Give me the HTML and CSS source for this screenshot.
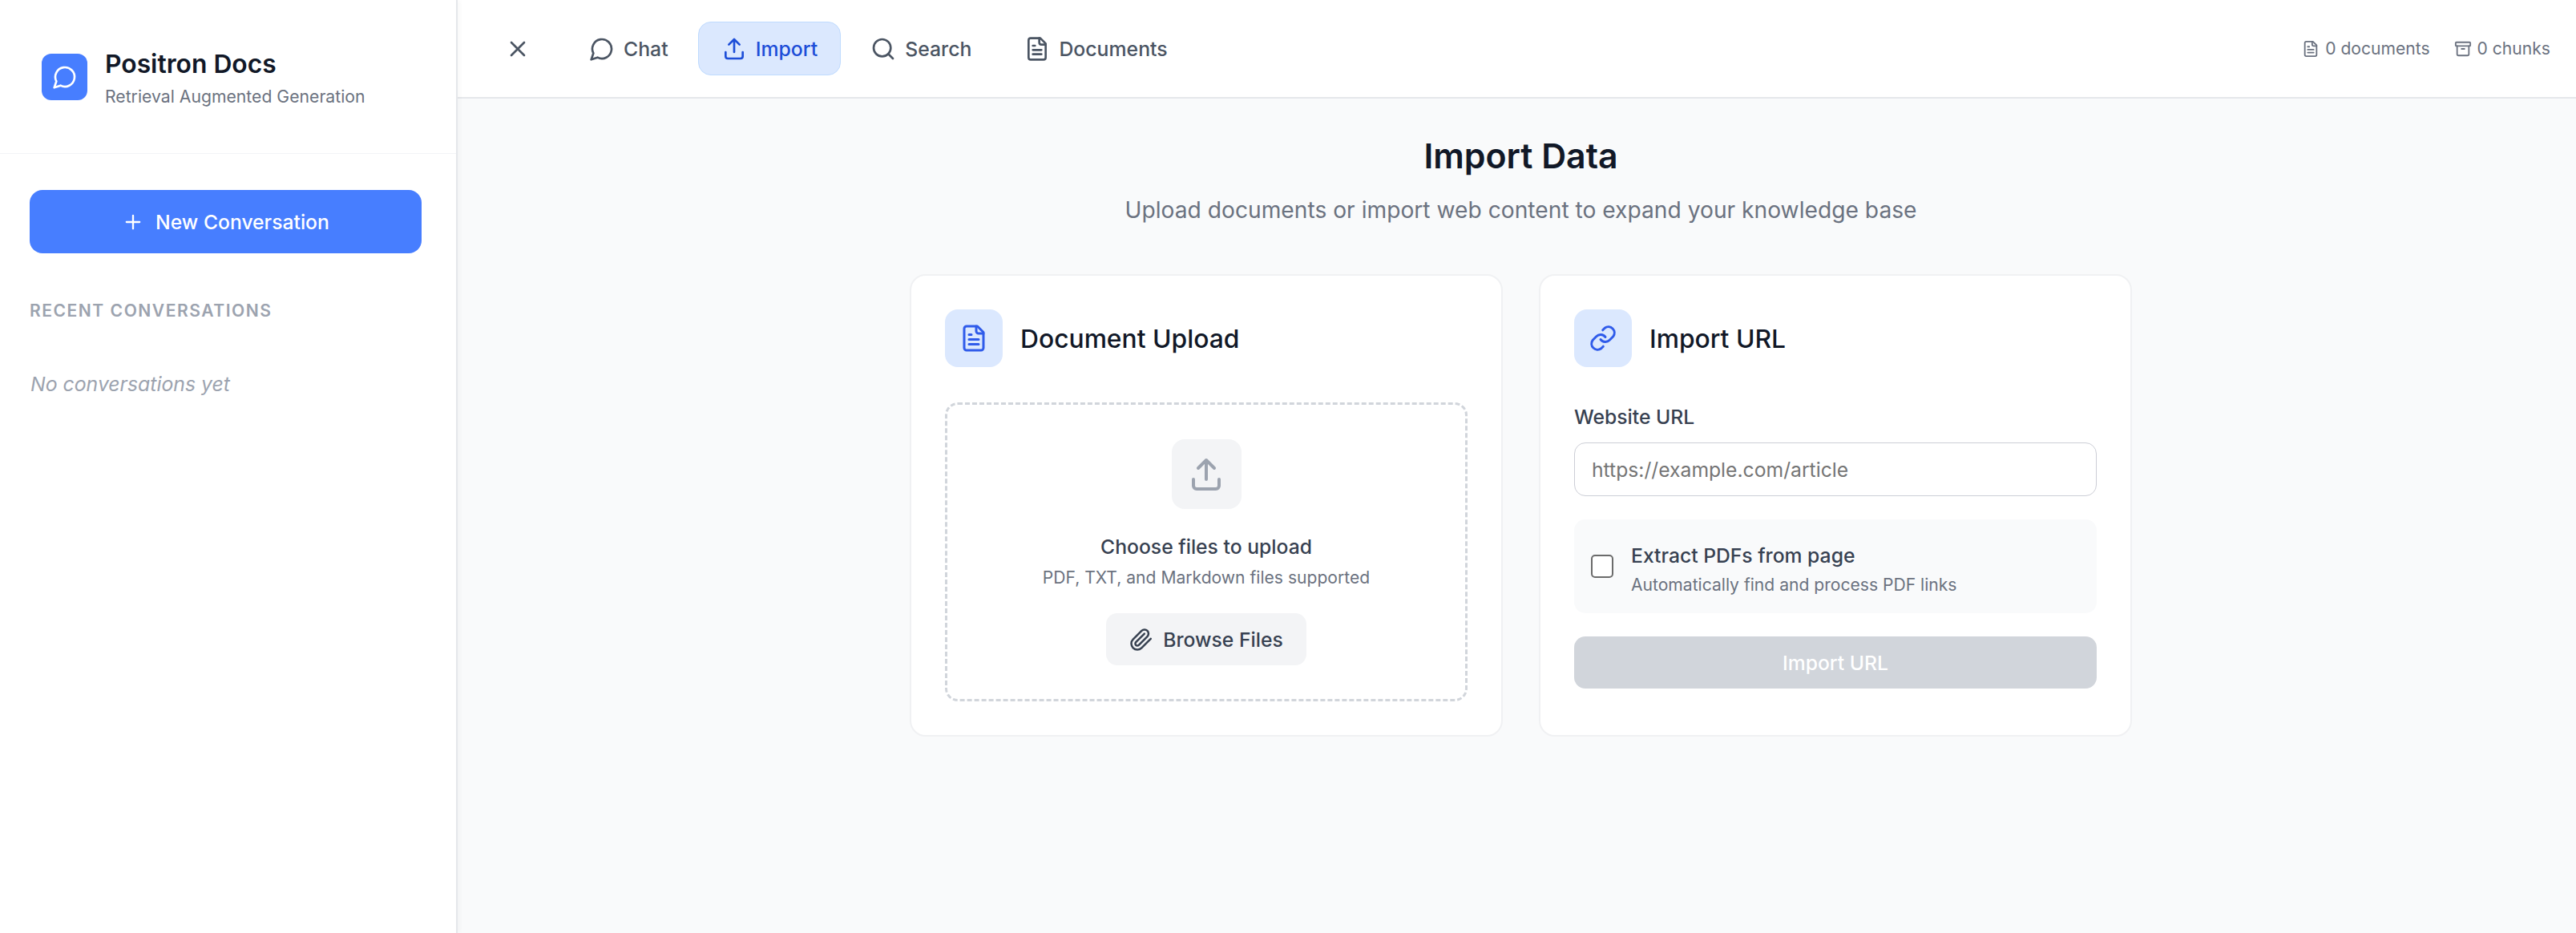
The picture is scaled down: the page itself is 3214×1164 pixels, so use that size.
FILE: index.html
```html
<!DOCTYPE html>
<html>
    <head>
        <title>Positron Docs</title>
        <link rel="stylesheet" href="styles.css">
    </head>
    <body>
        <aside class="sidebar">
            <div class="brand">
                <div class="brand-logo">
                    <svg class="icon" width="32" height="32" viewBox="0 0 24 24"><path d="M7.9 20A9 9 0 1 0 4 16.1L2 22Z"/></svg>
                </div>
                <div class="brand-text">
                    <div class="brand-name">Positron Docs</div>
                    <div class="brand-sub">Retrieval Augmented Generation</div>
                </div>
            </div>
            <div class="sidebar-body">
                <button class="new-btn">
                    <svg class="icon" width="28" height="28" viewBox="0 0 24 24"><path d="M5 12h14M12 5v14"/></svg>
                    New Conversation
                </button>
                <div class="recent-label">RECENT CONVERSATIONS</div>
                <div class="recent-empty">No conversations yet</div>
            </div>
        </aside>

        <div class="content">
            <header class="topbar">
                <button class="close-btn">
                    <svg class="icon" width="32" height="32" viewBox="0 0 24 24"><path d="M18 6 6 18M6 6l12 12"/></svg>
                </button>
                <nav class="tabs">
                    <a class="tab">
                        <svg class="icon" width="32" height="32" viewBox="0 0 24 24"><path d="M7.9 20A9 9 0 1 0 4 16.1L2 22Z"/></svg>
                        Chat
                    </a>
                    <a class="tab active">
                        <svg class="icon" width="32" height="32" viewBox="0 0 24 24"><path d="M12 15V3M7 8l5-5 5 5M4 15v4a2 2 0 0 0 2 2h12a2 2 0 0 0 2-2v-4"/></svg>
                        Import
                    </a>
                    <a class="tab">
                        <svg class="icon" width="32" height="32" viewBox="0 0 24 24"><circle cx="11" cy="11" r="8"/><path d="m21 21-4.3-4.3"/></svg>
                        Search
                    </a>
                    <a class="tab">
                        <svg class="icon" width="32" height="32" viewBox="0 0 24 24"><path d="M15 2H6a2 2 0 0 0-2 2v16a2 2 0 0 0 2 2h12a2 2 0 0 0 2-2V7Z"/><path d="M14 2v4a2 2 0 0 0 2 2h4M10 9H8M16 13H8M16 17H8"/></svg>
                        Documents
                    </a>
                </nav>
                <div class="stats">
                    <span class="stat">
                        <svg class="icon" width="22" height="22" viewBox="0 0 24 24"><path d="M15 2H6a2 2 0 0 0-2 2v16a2 2 0 0 0 2 2h12a2 2 0 0 0 2-2V7Z"/><path d="M14 2v4a2 2 0 0 0 2 2h4M10 9H8M16 13H8M16 17H8"/></svg>
                        0 documents
                    </span>
                    <span class="stat">
                        <svg class="icon" width="22" height="22" viewBox="0 0 24 24"><rect x="2" y="3" width="20" height="5" rx="1"/><path d="M4 8v11a2 2 0 0 0 2 2h12a2 2 0 0 0 2-2V8M10 12h4"/></svg>
                        0 chunks
                    </span>
                </div>
            </header>

            <main class="main">
                <h1 class="page-title">Import Data</h1>
                <p class="page-sub">Upload documents or import web content to expand your knowledge base</p>

                <div class="cards">
                    <section class="card">
                        <div class="card-head">
                            <div class="card-icon">
                                <svg class="icon" width="36" height="36" viewBox="0 0 24 24"><path d="M15 2H6a2 2 0 0 0-2 2v16a2 2 0 0 0 2 2h12a2 2 0 0 0 2-2V7Z"/><path d="M14 2v4a2 2 0 0 0 2 2h4M10 9H8M16 13H8M16 17H8"/></svg>
                            </div>
                            <h2>Document Upload</h2>
                        </div>
                        <div class="dropzone">
                            <div class="drop-icon">
                                <svg class="icon" width="48" height="48" viewBox="0 0 24 24"><path d="M12 15V3M7 8l5-5 5 5M4 15v4a2 2 0 0 0 2 2h12a2 2 0 0 0 2-2v-4"/></svg>
                            </div>
                            <div class="drop-title">Choose files to upload</div>
                            <div class="drop-sub">PDF, TXT, and Markdown files supported</div>
                            <button class="browse-btn">
                                <svg class="icon" width="30" height="30" viewBox="0 0 24 24"><path d="m21.44 11.05-9.19 9.19a6 6 0 0 1-8.49-8.49l8.57-8.57A4 4 0 1 1 18 8.84l-8.59 8.57a2 2 0 0 1-2.83-2.83l8.49-8.48"/></svg>
                                Browse Files
                            </button>
                        </div>
                    </section>

                    <section class="card">
                        <div class="card-head">
                            <div class="card-icon">
                                <svg class="icon" width="36" height="36" viewBox="0 0 24 24"><path d="M10 13a5 5 0 0 0 7.5.5l3-3a5 5 0 0 0-7-7l-1.7 1.7"/><path d="M14 11a5 5 0 0 0-7.5-.5l-3 3a5 5 0 0 0 7 7l1.7-1.7"/></svg>
                            </div>
                            <h2>Import URL</h2>
                        </div>
                        <label class="field-label" for="url">Website URL</label>
                        <input class="field-input" id="url" type="text" placeholder="https://example.com/article">
                        <div class="option">
                            <span class="checkbox"></span>
                            <div class="option-text">
                                <div class="option-title">Extract PDFs from page</div>
                                <div class="option-sub">Automatically find and process PDF links</div>
                            </div>
                        </div>
                        <button class="import-btn">Import URL</button>
                    </section>
                </div>
            </main>
        </div>
    </body>
</html>
```

FILE: styles.css
```css
* {
    box-sizing: border-box;
}
html, body {
    height: 100%;
}
body {
    margin: 0;
    display: flex;
    overflow: hidden;
    font-family: Inter, "Liberation Sans", sans-serif;
    background-color: #f9fafb;
    color: #111827;
}
button {
    font-family: inherit;
    border: none;
}
.icon {
    fill: none;
    stroke: currentColor;
    stroke-width: 2;
    stroke-linecap: round;
    stroke-linejoin: round;
    flex-shrink: 0;
}

/* sidebar */
.sidebar {
    width: 571px;
    flex-shrink: 0;
    background-color: #fff;
    border-right: 2px solid #e5e7eb;
    box-shadow: 2px 0 6px rgba(0, 0, 0, 0.04);
    z-index: 1;
}
.brand {
    height: 192px;
    padding-left: 52px;
    display: flex;
    align-items: center;
    gap: 22px;
    border-bottom: 1px solid #f3f4f6;
}
.brand-logo {
    width: 57px;
    height: 58px;
    border-radius: 12px;
    background-color: #477eff;
    color: #fff;
    display: flex;
    align-items: center;
    justify-content: center;
}
.brand-text {
    padding-top: 4px;
}
.brand-name {
    font-size: 31.8px;
    line-height: 40px;
    font-weight: 600;
}
.brand-sub {
    margin-top: 5px;
    font-size: 21.2px;
    line-height: 30px;
    color: #6b7280;
}
.sidebar-body {
    padding: 45px 43px 0 37px;
}
.new-btn {
    width: 100%;
    height: 79px;
    border-radius: 16px;
    background-color: #477eff;
    color: #fff;
    font-size: 24.7px;
    font-weight: 500;
    display: flex;
    align-items: center;
    justify-content: center;
    gap: 14px;
}
.recent-label {
    margin-top: 58px;
    font-size: 21.1px;
    line-height: 28px;
    font-weight: 600;
    letter-spacing: 1.5px;
    color: #9ca3af;
}
.recent-empty {
    margin-top: 61px;
    padding-left: 1px;
    font-size: 24.8px;
    line-height: 32px;
    font-style: italic;
    color: #9ca3af;
}

/* top bar */
.content {
    flex: 1;
    min-width: 0;
    display: flex;
    flex-direction: column;
}
.topbar {
    height: 123px;
    flex-shrink: 0;
    background-color: #fff;
    border-bottom: 2px solid #e5e7eb;
    padding: 0 32px 0 59px;
    display: flex;
    align-items: center;
}
.close-btn {
    width: 32px;
    height: 32px;
    padding: 0;
    background: none;
    color: #4b5563;
    display: flex;
}
.tabs {
    margin-left: 44px;
    display: flex;
    gap: 8px;
}
.tab {
    height: 67px;
    padding: 0 28px;
    border: 1px solid transparent;
    border-radius: 16px;
    font-size: 24.8px;
    font-weight: 500;
    color: #4b5563;
    display: flex;
    align-items: center;
    gap: 11px;
}
.tab.active {
    background-color: #dbe8fe;
    border-color: #bfdbfe;
    color: #1d4ed8;
}
.stats {
    margin-left: auto;
    display: flex;
    gap: 30px;
}
.stat {
    font-size: 21.1px;
    color: #6b7280;
    display: flex;
    align-items: center;
    gap: 7px;
}

/* import page */
.main {
    flex: 1;
    padding: 41px 0 0 10px;
    display: flex;
    flex-direction: column;
    align-items: center;
}
.page-title {
    margin: 0;
    font-size: 42.8px;
    line-height: 62px;
    font-weight: 600;
}
.page-sub {
    margin: 16px 0 0;
    font-size: 28.2px;
    line-height: 40px;
    color: #6b7280;
}
.cards {
    margin-top: 60px;
    display: flex;
    gap: 45px;
}
.card {
    width: 740px;
    height: 577px;
    padding: 42px;
    background-color: #fff;
    border: 2px solid #f0f1f3;
    border-radius: 20px;
}
.card-head {
    display: flex;
    align-items: center;
    gap: 22px;
    margin-bottom: 44px;
}
.card-head h2 {
    margin: 0;
    font-size: 31.8px;
    font-weight: 500;
}
.card-icon {
    width: 72px;
    height: 72px;
    border-radius: 16px;
    background-color: #dbe8fe;
    color: #2f5bea;
    display: flex;
    align-items: center;
    justify-content: center;
}
.dropzone {
    height: 373px;
    padding-top: 43px;
    border: 3px dashed #d1d5db;
    border-radius: 16px;
    display: flex;
    flex-direction: column;
    align-items: center;
}
.drop-icon {
    width: 87px;
    height: 87px;
    border-radius: 16px;
    background-color: #f3f4f6;
    color: #9ca3af;
    display: flex;
    align-items: center;
    justify-content: center;
}
.drop-title {
    margin-top: 29px;
    font-size: 24.7px;
    line-height: 36px;
    font-weight: 500;
    color: #374151;
}
.drop-sub {
    margin-top: 6px;
    font-size: 21.1px;
    line-height: 30px;
    color: #6b7280;
}
.browse-btn {
    margin-top: 29px;
    width: 250px;
    height: 65px;
    border-radius: 14px;
    background-color: #f3f4f6;
    color: #374151;
    font-size: 24.7px;
    font-weight: 500;
    display: flex;
    align-items: center;
    justify-content: center;
    gap: 12px;
}
.field-label {
    display: block;
    font-size: 24.7px;
    line-height: 36px;
    font-weight: 500;
    color: #374151;
}
.field-input {
    display: block;
    width: 100%;
    height: 67px;
    margin-top: 14px;
    padding: 0 21px;
    border: 1px solid #ccced6;
    border-radius: 14px;
    font-family: inherit;
    font-size: 24.7px;
    outline: none;
}
.field-input::placeholder {
    color: #757575;
}
.option {
    height: 117px;
    margin-top: 29px;
    padding: 0 21px;
    border-radius: 14px;
    background-color: #f9fafb;
    display: flex;
    align-items: center;
    gap: 22px;
}
.checkbox {
    width: 28px;
    height: 29px;
    flex-shrink: 0;
    background-color: #fff;
    border: 2px solid #6b6b6b;
    border-radius: 5px;
}
.option-text {
    padding-top: 7px;
}
.option-title {
    font-size: 24.7px;
    line-height: 36px;
    font-weight: 500;
    color: #374151;
}
.option-sub {
    margin-top: 4px;
    font-size: 21.1px;
    line-height: 30px;
    color: #6b7280;
}
.import-btn {
    width: 100%;
    height: 65px;
    margin-top: 29px;
    border-radius: 14px;
    background-color: #d1d5db;
    color: #fff;
    font-size: 24.7px;
    font-weight: 500;
}
```
